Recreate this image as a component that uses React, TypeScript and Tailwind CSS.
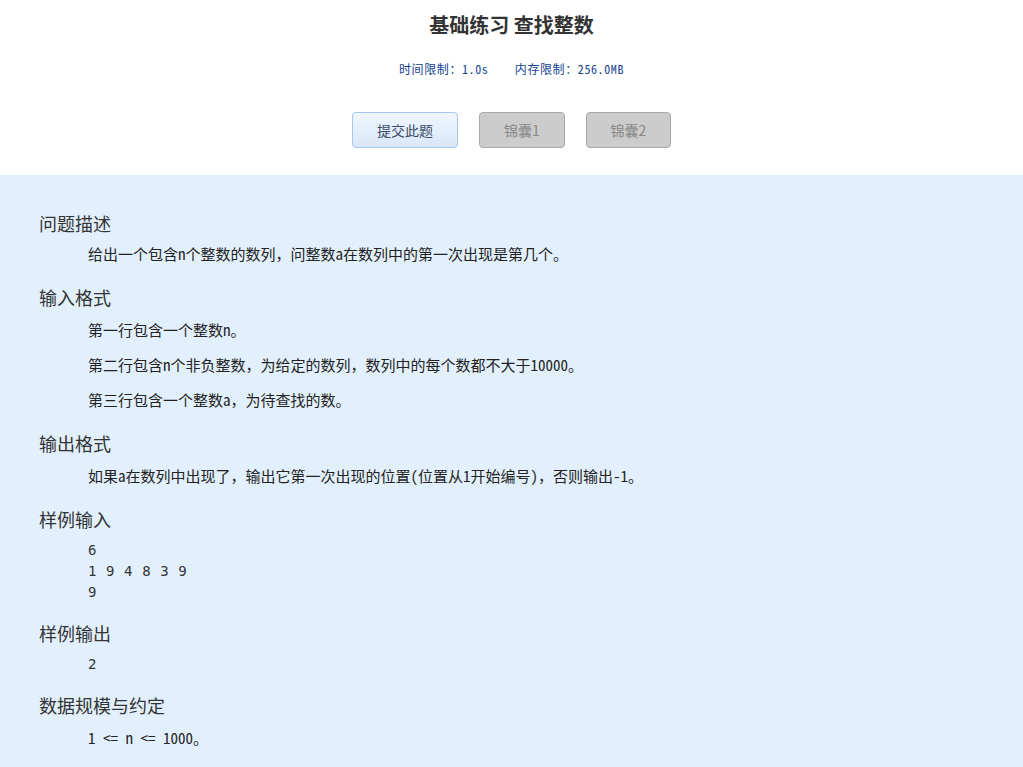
const BODY_FONT = 'font-["Noto_Sans_Mono_CJK_SC","Liberation_Mono","Noto_Sans_CJK_SC",monospace]'

const SECTIONS: { title: string; lines: string[]; pre?: boolean }[] = [
  { title: '问题描述', lines: ['给出一个包含n个整数的数列，问整数a在数列中的第一次出现是第几个。'] },
  {
    title: '输入格式',
    lines: [
      '第一行包含一个整数n。',
      '第二行包含n个非负整数，为给定的数列，数列中的每个数都不大于10000。',
      '第三行包含一个整数a，为待查找的数。',
    ],
  },
  { title: '输出格式', lines: ['如果a在数列中出现了，输出它第一次出现的位置(位置从1开始编号)，否则输出-1。'] },
  { title: '样例输入', lines: ['6', '1 9 4 8 3 9', '9'], pre: true },
  { title: '样例输出', lines: ['2'], pre: true },
  { title: '数据规模与约定', lines: ['1 <= n <= 1000。'] },
]

export default function App() {
  return (
    <div className="min-h-[767px] bg-[#e2f0fd] font-['Noto_Sans_CJK_SC',sans-serif] text-[#333]">
      {/* header */}
      <div className="h-[175px] bg-white flex flex-col items-center">
        <h1 className="mt-[11px] text-[20px] leading-[28px] font-bold text-[#333]">基础练习 查找整数</h1>
        <p className={`mt-[22px] text-[12px] leading-[16px] tracking-[0.6px] text-[#123f8f] ${BODY_FONT}`}>
          时间限制：1.0s&nbsp;&nbsp;&nbsp;&nbsp;内存限制：256.0MB
        </p>
        <div className="mt-[35px] flex gap-[21px]">
          <button className="w-[106px] h-[36px] rounded-[4px] border border-[#a3c8ee] bg-gradient-to-b from-[#f0f6fe] to-[#d8e7f9] text-[14px] text-[#3b4b66]">
            提交此题
          </button>
          <button className="w-[86px] h-[36px] rounded-[4px] border border-[#a8a8a8] bg-[#cccccc] text-[14px] text-[#888]">
            锦囊1
          </button>
          <button className="w-[85px] h-[36px] rounded-[4px] border border-[#a8a8a8] bg-[#cccccc] text-[14px] text-[#888]">
            锦囊2
          </button>
        </div>
      </div>

      {/* problem body */}
      <div className="pt-[37px] pb-[20px] pl-[39px] flex flex-col">
        {SECTIONS.map((s, i) => (
          <div key={s.title} className={s.pre ? 'mb-[19px]' : 'mb-[22px]'}>
            <h2 className="text-[18px] leading-[22px] font-normal text-[#333]">{s.title}</h2>
            {s.pre ? (
              <pre className="mt-[10px] pl-[49px] font-['DejaVu_Sans_Mono',monospace] text-[14px] tracking-[0.6px] leading-[21px] text-[#333]">
                {s.lines.join('\n')}
              </pre>
            ) : (
              <div
                className={`${i === 0 ? 'mt-[10px]' : 'mt-[12px]'} pl-[49px] flex flex-col gap-[15px] text-[15px] leading-[20px] text-[#222] ${BODY_FONT}`}
              >
                {s.lines.map((l) => (
                  <p key={l}>{l}</p>
                ))}
              </div>
            )}
          </div>
        ))}
      </div>
    </div>
  )
}
